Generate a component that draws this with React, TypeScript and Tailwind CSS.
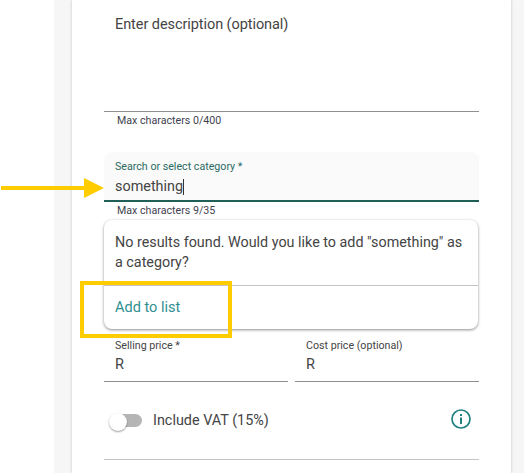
export default function App() {
  return (
    <div className="relative flex h-[473px] w-[524px] overflow-hidden bg-white font-['Roboto',sans-serif] text-[#444]">
      {/* Page background */}
      <div className="ml-[54px] flex w-[470px] bg-[#f6f6f6] pl-[18px] pr-[13px]">
        <div className="flex h-[473px] w-[439px] flex-col bg-white px-[32px] shadow-[0_0_3px_rgba(0,0,0,0.2)]">
          {/* Description */}
          <div className="h-[112px] border-b border-[#8f8f8f] px-[11px] pt-[15px] text-[14.5px] leading-5 tracking-[-0.07px]">
            Enter description (optional)
          </div>
          <p className="mt-[2px] h-[38px] px-[13px] text-[10.67px] leading-[14px] text-[#3f3f4f]">Max characters 0/400</p>

          {/* Category */}
          <div className="h-[50px] rounded-t-lg border-b-2 border-[#1f5f58] bg-[#fafafa] px-[11px] pt-[8px]">
            <div className="text-[10.67px] leading-[13px] text-[#2b6b63]">Search or select category *</div>
            <div className="mt-[4px] flex h-[20px] items-center text-[14.4px] leading-5">
              something
              <span className="h-[16px] w-px bg-[#333]"></span>
            </div>
          </div>
          <p className="mt-[2px] h-[16px] px-[13px] text-[10.67px] leading-[14px] text-[#3f3f4f]">Max characters 9/35</p>

          {/* Dropdown */}
          <div className="h-[109px] w-[374px] rounded-lg bg-white shadow-[0_1px_3px_rgba(0,0,0,0.45)]">
            <div className="h-[66px] border-b border-[#c4c4c4] px-[11px] pt-[12px] text-[14.33px] leading-5">
              No results found. Would you like to add "something" as a category?
            </div>
            <div className="px-[11px] pt-[12px] text-[14.5px] leading-5 text-[#2f8f8f]">Add to list</div>
          </div>

          {/* Prices */}
          <div className="mt-[10px] flex gap-[7px]">
            <div className="h-[43px] w-[184px] border-b border-[#8f8f8f] px-[11px]">
              <div className="text-[10.67px] leading-[14px]">Selling price *</div>
              <div className="mt-[2px] text-[14.5px] leading-5">R</div>
            </div>
            <div className="h-[43px] w-[184px] border-b border-[#8f8f8f] px-[11px]">
              <div className="text-[10.67px] leading-[14px]">Cost price (optional)</div>
              <div className="mt-[2px] text-[14.5px] leading-5">R</div>
            </div>
          </div>

          {/* VAT */}
          <div className="flex h-[78px] items-center border-b border-[#c4c4c4] pl-[5px] pr-[8px]">
            <div className="relative mr-[11px] h-[13px] w-[33px]">
              <div className="absolute inset-y-0 left-[8px] right-0 rounded-full bg-[#b5b5b5]"></div>
              <div className="absolute left-0 top-[-1px] h-[18px] w-[18px] rounded-full bg-white shadow-[0_1px_2px_rgba(0,0,0,0.4)]"></div>
            </div>
            <span className="text-[14.4px] leading-5">Include VAT (15%)</span>
            <svg className="ml-auto mb-[3px]" width="20" height="20" viewBox="0 0 20 20" fill="none">
              <circle cx="10" cy="10" r="9" stroke="#1f8080" strokeWidth="1.7" />
              <rect x="9" y="8.5" width="2" height="6.5" fill="#1f8080" />
              <rect x="9" y="5" width="2" height="2" fill="#1f8080" />
            </svg>
          </div>
        </div>
      </div>

      {/* Annotation arrow */}
      <div className="absolute left-[1px] top-[186px] h-[4px] w-[84px] bg-[#ffcc00]"></div>
      <svg className="absolute left-[84px] top-[178px]" width="20" height="20" viewBox="0 0 20 20">
        <path d="M0 0L20 10L0 20Z" fill="#ffcc00" />
      </svg>

      {/* Annotation box */}
      <div className="absolute left-[80px] top-[281px] h-[57px] w-[152px] border-[4px] border-[#ffcc00]"></div>
    </div>
  );
}
